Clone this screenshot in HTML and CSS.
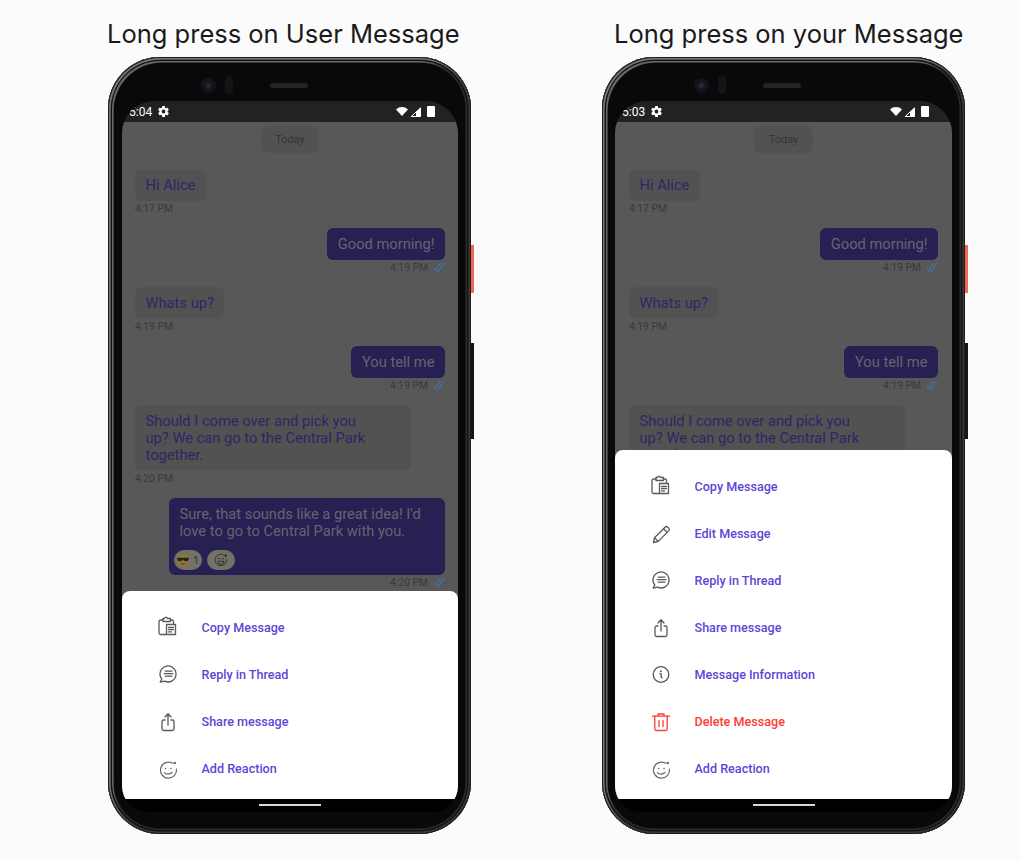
FILE: index.html
```html
<!DOCTYPE html>
<html lang="en">
<head>
    <meta charset="UTF-8">
    <meta name="viewport" content="width=device-width, initial-scale=1.0">
    <title>Message Actions</title>
    <link rel="stylesheet" href="styles.css">
</head>
<body>

    <!-- Shared icons -->
    <svg class="icon-defs" xmlns="http://www.w3.org/2000/svg">
        <symbol id="i-gear" viewBox="0 0 24 24">
            <path fill="#fff" d="M19.4 13c.04-.3.1-.66.1-1s-.06-.7-.1-1l2.1-1.65c.2-.15.25-.42.12-.64l-2-3.46c-.12-.22-.38-.3-.6-.22l-2.5 1c-.5-.4-1.08-.72-1.7-.98l-.37-2.65A.5.5 0 0 0 14 2h-4a.5.5 0 0 0-.5.42l-.37 2.65c-.62.26-1.2.58-1.7.98l-2.5-1c-.22-.08-.48 0-.6.22l-2 3.46c-.13.22-.08.49.12.64L4.6 11c-.04.3-.1.66-.1 1s.06.7.1 1l-2.1 1.65c-.2.15-.25.42-.12.64l2 3.46c.12.22.38.3.6.22l2.5-1c.5.4 1.08.72 1.7.98l.37 2.65c.05.24.26.42.5.42h4c.24 0 .45-.18.5-.42l.37-2.65c.62-.26 1.2-.58 1.7-.98l2.5 1c.22.08.48 0 .6-.22l2-3.46c.13-.22.08-.49-.12-.64L19.4 13zM12 15.5a3.5 3.5 0 1 1 0-7 3.5 3.5 0 0 1 0 7z"/>
        </symbol>
        <symbol id="i-check" viewBox="0 0 12 10">
            <path fill="none" stroke="#3f75ad" stroke-width="1.200" d="M1 6l1.500 2.500L7.500 1M4.500 8.500L5.500 9.200 11 1"/>
        </symbol>
        <symbol id="i-copy" viewBox="0 0 24 24">
            <g fill="none" stroke="#5a5a5a" stroke-width="1.300" stroke-linejoin="round" stroke-linecap="round">
                <path d="M7 4H4.500A1.500 1.500 0 0 0 3 5.500V17a1.500 1.500 0 0 0 1.500 1.500H10"/>
                <path d="M14.500 4H16a1.500 1.500 0 0 1 1.500 1.500V8"/>
                <path d="M7 2.500h1.500c.3-1 1-1.300 1.500-1.300s1.200.3 1.500 1.300h3v3H7z"/>
                <rect x="10.500" y="8.500" width="9" height="10" fill="#fff"/>
                <path d="M12.500 11.500h5M12.500 13.700h5M12.500 15.900h3"/>
            </g>
        </symbol>
        <symbol id="i-edit" viewBox="0 0 24 24">
            <g fill="none" stroke="#5a5a5a" stroke-width="1.300" stroke-linejoin="round">
                <path d="M4.500 20.500l1-4.800L16 5.200a2 2 0 0 1 2.800 0l.9.9a2 2 0 0 1 0 2.800L9.300 19.400z"/>
                <path d="M14.500 6.700l3.800 3.800M5.500 15.700l3.800 3.700"/>
            </g>
        </symbol>
        <symbol id="i-reply" viewBox="0 0 24 24">
            <g fill="none" stroke="#5a5a5a" stroke-width="1.300" stroke-linejoin="round" stroke-linecap="round">
                <path d="M4.200 19l1.600-3A8 8 0 1 1 8.600 18.200z"/>
                <path d="M9.300 8.200h6.600M8.300 10.700h8.600M9.300 13.200h6.600"/>
            </g>
        </symbol>
        <symbol id="i-share" viewBox="0 0 24 24">
            <g fill="none" stroke="#5a5a5a" stroke-width="1.300" stroke-linejoin="round" stroke-linecap="round">
                <path d="M9 10H7.500A1.500 1.500 0 0 0 6 11.500v7.500A1.500 1.500 0 0 0 7.500 20.500h9a1.500 1.500 0 0 0 1.500-1.500v-7.500A1.500 1.500 0 0 0 16.500 10H15"/>
                <path d="M12 15V4M9 7l3-3.200L15 7"/>
            </g>
        </symbol>
        <symbol id="i-info" viewBox="0 0 24 24">
            <g fill="none" stroke="#5a5a5a" stroke-width="1.300" stroke-linecap="round">
                <circle cx="12" cy="11.500" r="7.800"/>
                <path d="M10.800 10.800h1.400v3.200c0 .6.300.8.900.7"/>
            </g>
            <circle cx="11.900" cy="8.200" r="1" fill="#5a5a5a"/>
        </symbol>
        <symbol id="i-delete" viewBox="0 0 24 24">
            <g fill="none" stroke="#ff3b35" stroke-width="1.300" stroke-linejoin="round" stroke-linecap="round">
                <path d="M3.500 6.200h17M9 6V4h6v2"/>
                <path d="M5.800 6.200V19a1.500 1.500 0 0 0 1.500 1.500h9.400a1.500 1.500 0 0 0 1.500-1.500V6.200"/>
                <path d="M10 10.300v6.200M14 10.300v6.200"/>
            </g>
        </symbol>
        <symbol id="i-smile" viewBox="0 0 24 24">
            <g fill="none" stroke="#6a6a6a" stroke-width="1.200" stroke-linecap="round">
                <path d="M16.500 6.200A8 8 0 1 0 20.400 12"/>
                <path d="M8.500 15.500c1 2.100 5.500 2.100 7.500 0"/>
            </g>
            <circle cx="9.500" cy="11.500" r=".8" fill="#6a6a6a"/>
            <circle cx="15" cy="11.500" r=".8" fill="#6a6a6a"/>
            <circle cx="18.700" cy="6" r="1.300" fill="#6a6a6a"/>
        </symbol>
        <symbol id="i-cool" viewBox="0 0 16 16">
            <circle cx="8" cy="8" r="7" fill="#8f7832"/>
            <path fill="#222" d="M1.500 5.500h13v1.500c0 1.500-1.500 2.500-3 2.500S8.800 8.500 8 7.500c-.8 1-2 2-3.500 2S1.500 8.500 1.500 7z"/>
            <path fill="none" stroke="#4a3a14" d="M5.500 11.800c1.500 1 3.500 1 5 0"/>
        </symbol>
        <symbol id="i-add" viewBox="0 0 16 16">
            <g fill="none" stroke="#2c2c2c" stroke-width="1">
                <path d="M11 2.300A6.500 6.500 0 1 0 14.200 7"/>
                <path d="M4.500 9.500h7a3.500 3.500 0 0 1-7 0z"/>
                <path d="M4.500 7l1.500-1 1.500 1M8.500 7L10 6l1.500 1"/>
                <path d="M13.200 1v4M11.200 3h4"/>
            </g>
        </symbol>
    </svg>

    <div class="page">

        <!-- Long press on a received message -->
        <section class="demo">
            <h1 class="demo-title">Long press on User Message</h1>
            <div class="phone">
                <div class="hardware">
                    <span class="camera"></span>
                    <span class="sensor"></span>
                    <span class="speaker"></span>
                </div>
                <div class="screen">
                    <div class="status-bar">
                        <span class="clock">5:04</span>
                        <svg class="status-gear"><use href="#i-gear"/></svg>
                        <span class="status-right">
                            <svg class="wifi" viewBox="0 0 12 9"><path fill="#fff" d="M0 2.500C3.500-.8 8.500-.8 12 2.500L6 9z"/></svg>
                            <svg class="signal" viewBox="0 0 11 10"><path fill="none" stroke="#fff" d="M1.200 9.500L10.500 .9v8.600z"/><path fill="#fff" d="M6 9.500V5l4.500-4v8.500z"/></svg>
                            <span class="battery"></span>
                        </span>
                    </div>
                    <div class="chat">
                        <div class="day-pill">Today</div>
                        <div class="msg">
                            <div class="bubble">Hi Alice</div>
                            <div class="meta">4:17 PM</div>
                        </div>
                        <div class="msg mine">
                            <div class="bubble">Good morning!</div>
                            <div class="meta">4:19 PM <svg class="check"><use href="#i-check"/></svg></div>
                        </div>
                        <div class="msg">
                            <div class="bubble">Whats up?</div>
                            <div class="meta">4:19 PM</div>
                        </div>
                        <div class="msg mine">
                            <div class="bubble">You tell me</div>
                            <div class="meta">4:19 PM <svg class="check"><use href="#i-check"/></svg></div>
                        </div>
                        <div class="msg">
                            <div class="bubble wide">Should I come over and pick you<br>up? We can go to the Central Park together.</div>
                            <div class="meta">4:20 PM</div>
                        </div>
                        <div class="msg mine">
                            <div class="bubble wide">
                                Sure, that sounds like a great idea! I'd love to go to Central Park with you.
                                <div class="reactions">
                                    <span class="reaction"><svg class="emoji"><use href="#i-cool"/></svg> 1</span>
                                    <span class="reaction"><svg class="emoji"><use href="#i-add"/></svg></span>
                                </div>
                            </div>
                            <div class="meta">4:20 PM <svg class="check"><use href="#i-check"/></svg></div>
                        </div>
                        <ul class="sheet">
                            <li class="action"><svg class="action-icon"><use href="#i-copy"/></svg>Copy Message</li>
                            <li class="action"><svg class="action-icon"><use href="#i-reply"/></svg>Reply in Thread</li>
                            <li class="action"><svg class="action-icon"><use href="#i-share"/></svg>Share message</li>
                            <li class="action"><svg class="action-icon"><use href="#i-smile"/></svg>Add Reaction</li>
                        </ul>
                    </div>
                    <div class="nav-bar"><span class="home-line"></span></div>
                </div>
                <span class="btn-power"></span>
                <span class="btn-volume"></span>
            </div>
        </section>

        <!-- Long press on your own message -->
        <section class="demo own">
            <h1 class="demo-title">Long press on your Message</h1>
            <div class="phone">
                <div class="hardware">
                    <span class="camera"></span>
                    <span class="sensor"></span>
                    <span class="speaker"></span>
                </div>
                <div class="screen">
                    <div class="status-bar">
                        <span class="clock">5:03</span>
                        <svg class="status-gear"><use href="#i-gear"/></svg>
                        <span class="status-right">
                            <svg class="wifi" viewBox="0 0 12 9"><path fill="#fff" d="M0 2.500C3.500-.8 8.500-.8 12 2.500L6 9z"/></svg>
                            <svg class="signal" viewBox="0 0 11 10"><path fill="none" stroke="#fff" d="M1.200 9.500L10.500 .9v8.600z"/><path fill="#fff" d="M6 9.500V5l4.500-4v8.500z"/></svg>
                            <span class="battery"></span>
                        </span>
                    </div>
                    <div class="chat">
                        <div class="day-pill">Today</div>
                        <div class="msg">
                            <div class="bubble">Hi Alice</div>
                            <div class="meta">4:17 PM</div>
                        </div>
                        <div class="msg mine">
                            <div class="bubble">Good morning!</div>
                            <div class="meta">4:19 PM <svg class="check"><use href="#i-check"/></svg></div>
                        </div>
                        <div class="msg">
                            <div class="bubble">Whats up?</div>
                            <div class="meta">4:19 PM</div>
                        </div>
                        <div class="msg mine">
                            <div class="bubble">You tell me</div>
                            <div class="meta">4:19 PM <svg class="check"><use href="#i-check"/></svg></div>
                        </div>
                        <div class="msg">
                            <div class="bubble wide">Should I come over and pick you<br>up? We can go to the Central Park together.</div>
                            <div class="meta">4:20 PM</div>
                        </div>
                        <ul class="sheet">
                            <li class="action"><svg class="action-icon"><use href="#i-copy"/></svg>Copy Message</li>
                            <li class="action"><svg class="action-icon"><use href="#i-edit"/></svg>Edit Message</li>
                            <li class="action"><svg class="action-icon"><use href="#i-reply"/></svg>Reply in Thread</li>
                            <li class="action"><svg class="action-icon"><use href="#i-share"/></svg>Share message</li>
                            <li class="action"><svg class="action-icon"><use href="#i-info"/></svg>Message Information</li>
                            <li class="action danger"><svg class="action-icon"><use href="#i-delete"/></svg>Delete Message</li>
                            <li class="action"><svg class="action-icon"><use href="#i-smile"/></svg>Add Reaction</li>
                        </ul>
                    </div>
                    <div class="nav-bar"><span class="home-line"></span></div>
                </div>
                <span class="btn-power"></span>
                <span class="btn-volume"></span>
            </div>
        </section>

    </div>

</body>
</html>
```

FILE: styles.css
```css
* {
    box-sizing: border-box;
}

body {
    margin: 0;
    background-color: #fbfbfb;
    font-family: Roboto, sans-serif;
    overflow: hidden;
}

.icon-defs {
    display: none;
}

.page {
    display: flex;
    gap: 131px;
    padding: 17px 0 0 108px;
}

.demo {
    width: 363px;
}

.demo-title {
    margin: 0 0 6px -1px;
    font-family: Inter, sans-serif;
    font-size: 25.500px;
    font-weight: 400;
    line-height: 34px;
    color: #1a1a1a;
    white-space: nowrap;
}

.own .demo-title {
    margin-left: 12px;
}

/* Phone frame */
.phone {
    position: relative;
    width: 363px;
    height: 777px;
    padding: 0 13px 0 14px;
    border-radius: 52px;
    background-color: #09090b;
    box-shadow:
        inset 0 0 0 1px #1c1c1c,
        inset 1px 1px 0 1.500px #777,
        inset 0 0 0 2.500px #3a3a3a,
        inset 0 0 0 4px #141414,
        inset 2px 2px 0 3.500px #666,
        inset 0 0 0 5.500px #2c2c2c;
}

.own .phone {
    padding: 0 13px;
}

.hardware {
    display: flex;
    align-items: center;
    height: 44px;
    padding: 12px 0 0 79px;
}

.camera {
    width: 15px;
    height: 15px;
    border-radius: 50%;
    background: radial-gradient(circle, #2a3050 0, #15151b 35%, #101012 100%);
}

.sensor {
    width: 8px;
    height: 18px;
    margin-left: 9px;
    border-radius: 4px;
    background-color: #141416;
}

.speaker {
    width: 38px;
    height: 5px;
    margin-left: 37px;
    border-radius: 3px;
    background-color: #232325;
}

.screen {
    height: 711px;
    border-radius: 32px 32px 26px 26px;
    background-color: #000;
    overflow: hidden;
}

.status-bar {
    display: flex;
    align-items: center;
    height: 21px;
    padding: 0 23px 0 7px;
    background-color: #222;
    color: #fff;
    font-size: 12px;
}

.status-gear {
    width: 13px;
    height: 13px;
    margin-left: 4.500px;
}

.status-right {
    display: flex;
    align-items: center;
    gap: 2px;
    margin-left: auto;
}

.wifi {
    width: 12px;
    height: 9px;
}

.signal {
    width: 11px;
    height: 10px;
}

.battery {
    width: 8px;
    height: 11px;
    margin-left: 4px;
    border-radius: 1px;
    background-color: #fff;
}

/* Chat under the dim layer */
.chat {
    position: relative;
    display: flex;
    flex-direction: column;
    height: 677px;
    padding: 4px 13px 0 13px;
    background-color: #585858;
    overflow: hidden;
}

.own .chat {
    padding: 4px 14px 0 14px;
}

.day-pill {
    align-self: center;
    height: 27px;
    margin-bottom: 16px;
    padding: 0 14.500px;
    border-radius: 8px;
    background-color: #525252;
    color: #343434;
    font-size: 11px;
    line-height: 27px;
}

.msg {
    display: flex;
    flex-direction: column;
    align-items: flex-start;
    margin-bottom: 13px;
}

.msg.mine {
    align-items: flex-end;
}

.bubble {
    padding: 8px 10.500px 7px;
    border-radius: 6px;
    background-color: #525252;
    color: #2c2766;
    font-size: 14.700px;
    line-height: 17px;
}

.mine .bubble {
    background-color: #272052;
    color: #676470;
}

.bubble.wide {
    width: 276px;
}

.meta {
    display: flex;
    align-items: center;
    gap: 5px;
    height: 14px;
    color: #3a3a3a;
    font-size: 10.300px;
}

.check {
    width: 12px;
    height: 10px;
}

.reactions {
    display: flex;
    gap: 5px;
    height: 20px;
    margin: 10px 0 -2px -6px;
}

.reaction {
    display: flex;
    align-items: center;
    justify-content: center;
    gap: 3px;
    width: 28px;
    height: 20px;
    border-radius: 10px;
    background-color: #747166;
    color: #353535;
    font-size: 11px;
}

.emoji {
    width: 14px;
    height: 14px;
}

/* Bottom sheet with the actions */
.sheet {
    position: absolute;
    left: 0;
    right: 0;
    bottom: 0;
    margin: 0;
    padding: 13px 0 7px;
    border-radius: 8px 8px 0 0;
    background-color: #fff;
    list-style: none;
}

.action {
    display: flex;
    align-items: center;
    gap: 21.500px;
    height: 47px;
    padding-left: 34px;
    color: #5b47d6;
    font-size: 12.600px;
    font-weight: 500;
}

.action.danger {
    color: #ff3b35;
}

.action-icon {
    width: 24px;
    height: 24px;
}

.nav-bar {
    display: flex;
    justify-content: center;
    height: 13px;
    padding-top: 5px;
}

.home-line {
    width: 62px;
    height: 2px;
    background-color: #d8d8d8;
}

.btn-power {
    position: absolute;
    left: 363px;
    top: 188px;
    width: 3px;
    height: 48px;
    background-color: #ee6a55;
}

.btn-volume {
    position: absolute;
    left: 363px;
    top: 286px;
    width: 3px;
    height: 96px;
    background-color: #151515;
}
```
